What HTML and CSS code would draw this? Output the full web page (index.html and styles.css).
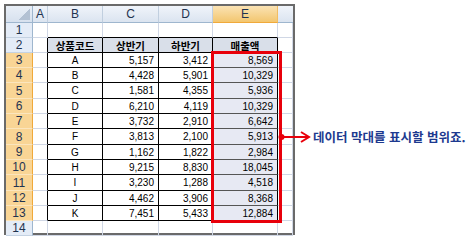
FILE: index.html
```html
<!DOCTYPE html>
<html lang="ko">
<head>
<meta charset="utf-8">
<link rel="stylesheet" href="styles.css">
</head>
<body>
<div class="page">
  <div class="sheet">
    <div class="cells">
      <div class="corner"></div><div class="ch">A</div><div class="ch">B</div><div class="ch">C</div><div class="ch">D</div><div class="ch sel">E</div><div class="ch last"></div>

      <div class="rh">1</div><div class="c"></div><div class="c tt"></div><div class="c tt"></div><div class="c tt"></div><div class="c tt"></div><div class="c"></div>

      <div class="rh">2</div><div class="c tl"></div><div class="t th">상품코드</div><div class="t th">상반기</div><div class="t th">하반기</div><div class="t th">매출액</div><div class="c"></div>

      <div class="rh sel">3</div><div class="c tl"></div><div class="t ctr">A</div><div class="t num">5,157</div><div class="t num">3,412</div><div class="t num e">8,569</div><div class="c"></div>
      <div class="rh sel">4</div><div class="c tl"></div><div class="t ctr">B</div><div class="t num">4,428</div><div class="t num">5,901</div><div class="t num e">10,329</div><div class="c"></div>
      <div class="rh sel">5</div><div class="c tl"></div><div class="t ctr">C</div><div class="t num">1,581</div><div class="t num">4,355</div><div class="t num e">5,936</div><div class="c"></div>
      <div class="rh sel">6</div><div class="c tl"></div><div class="t ctr">D</div><div class="t num">6,210</div><div class="t num">4,119</div><div class="t num e">10,329</div><div class="c"></div>
      <div class="rh sel">7</div><div class="c tl"></div><div class="t ctr">E</div><div class="t num">3,732</div><div class="t num">2,910</div><div class="t num e">6,642</div><div class="c"></div>
      <div class="rh sel">8</div><div class="c tl"></div><div class="t ctr">F</div><div class="t num">3,813</div><div class="t num">2,100</div><div class="t num e">5,913</div><div class="c"></div>
      <div class="rh sel">9</div><div class="c tl"></div><div class="t ctr">G</div><div class="t num">1,162</div><div class="t num">1,822</div><div class="t num e">2,984</div><div class="c"></div>
      <div class="rh sel">10</div><div class="c tl"></div><div class="t ctr">H</div><div class="t num">9,215</div><div class="t num">8,830</div><div class="t num e">18,045</div><div class="c"></div>
      <div class="rh sel">11</div><div class="c tl"></div><div class="t ctr">I</div><div class="t num">3,230</div><div class="t num">1,288</div><div class="t num e">4,518</div><div class="c"></div>
      <div class="rh sel">12</div><div class="c tl"></div><div class="t ctr">J</div><div class="t num">4,462</div><div class="t num">3,906</div><div class="t num e">8,368</div><div class="c"></div>
      <div class="rh sel">13</div><div class="c tl"></div><div class="t ctr">K</div><div class="t num">7,451</div><div class="t num">5,433</div><div class="t num e">12,884</div><div class="c"></div>

      <div class="rh">14</div><div class="c"></div><div class="c"></div><div class="c"></div><div class="c"></div><div class="c"></div><div class="c"></div>
    </div>
    <div class="overlay">
      <div class="range"></div>
    </div>
  </div>

  <div class="note">
    <svg class="arrow" width="34" height="14" viewBox="0 0 34 14">
      <line x1="3" y1="7" x2="31" y2="7" stroke="#e8000b" stroke-width="2"/>
      <circle cx="3.5" cy="7" r="3" fill="#e8000b"/>
      <polyline points="23,2 31,7 23,12" fill="none" stroke="#e8000b" stroke-width="2"/>
    </svg>
    <span class="note-text">데이터 막대를 표시할 범위죠.</span>
  </div>
</div>
</body>
</html>
```

FILE: styles.css
```css
* { box-sizing: border-box; }

html, body {
  margin: 0;
  padding: 0;
  background: #ffffff;
}

.page {
  display: flex;
  align-items: flex-start;
  padding: 4px 0 0 4px;
  width: 473px;
  height: 242px;
}

.sheet {
  border: 2px solid #6a6a6a;
  width: 291px;
  height: 231px;
  display: grid;
  grid-template-columns: 1fr;
  grid-template-rows: 1fr;
  background: #fff;
}

.cells,
.overlay {
  grid-area: 1 / 1;
  display: grid;
  grid-template-columns: 27px 15px 55px 56px 54px 65px 1fr;
  grid-template-rows: 17px 15px 15px 15px 15px 16px 15px 15px 16px 15px 15px 16px 15px 15px 1fr;
}

.cells {
  font-family: "Liberation Sans", "Noto Sans CJK KR", sans-serif;
  font-size: 10px;
  color: #000;
}

.cells > div {
  border-right: 1px solid #d0d7e5;
  border-bottom: 1px solid #d0d7e5;
  display: flex;
  align-items: center;
  overflow: hidden;
  white-space: nowrap;
}

.cells > .corner {
  background:
    linear-gradient(to bottom right, transparent 50%, #b3c1d3 50%) right 2px bottom 2px / 11px 11px no-repeat,
    linear-gradient(#e9eff7, #d7e1ee);
  border-right: 1px solid #9eb6ce;
  border-bottom: 1px solid #9eb6ce;
}

.cells > .ch {
  background: linear-gradient(#f0f4fa, #dbe4f0);
  border-right: 1px solid #c1cfdf;
  border-bottom: 1px solid #9eb6ce;
  justify-content: center;
  font-size: 12px;
  color: #1f3350;
}

.cells > .ch.sel {
  background: linear-gradient(#fbe3b4, #f3c66f);
  border-right: 1px solid #f2bd63;
  border-bottom: 1px solid #f0a93a;
}

.cells > .ch.last {
  border-right: none;
}

.cells > .rh {
  background: #e4ecf7;
  border-right: 1px solid #9eb6ce;
  border-bottom: 1px solid #c4d2e2;
  justify-content: center;
  font-size: 12px;
  color: #1f3350;
}

.cells > .rh.sel {
  background: #f9d595;
  border-right: 1px solid #f0a93a;
  border-bottom: 1px solid #fbe5bd;
}

.cells > .tt {
  border-bottom: 1px solid #000;
}

.cells > .tl {
  border-right: 1px solid #000;
}

.cells > .t {
  border-right: 1px solid #000;
  border-bottom: 1px solid #000;
}

.cells > .th {
  background: #d9dfe9;
  justify-content: center;
  font-family: "Noto Sans CJK KR", sans-serif;
  font-weight: 700;
  font-size: 10.5px;
}

.cells > .ctr {
  justify-content: center;
}

.cells > .num {
  justify-content: flex-end;
  padding-right: 4px;
}

.cells > .e {
  background: #e7e9f3;
  border-bottom: 1px solid #555;
  padding-right: 4px;
}

.range {
  grid-column: 6;
  grid-row: 4 / 15;
  margin: -2px -4px -2px -2px;
  border: 3px solid #e8000b;
}

.note {
  display: flex;
  align-items: center;
  margin-left: -17px;
  margin-top: 126px;
  height: 14px;
}

.arrow {
  display: block;
  flex: none;
}

.note-text {
  margin-left: 1px;
  font-family: "Noto Sans CJK KR", sans-serif;
  font-weight: 700;
  font-size: 12.5px;
  line-height: 14px;
  color: #1d3a8f;
  white-space: nowrap;
}
```
